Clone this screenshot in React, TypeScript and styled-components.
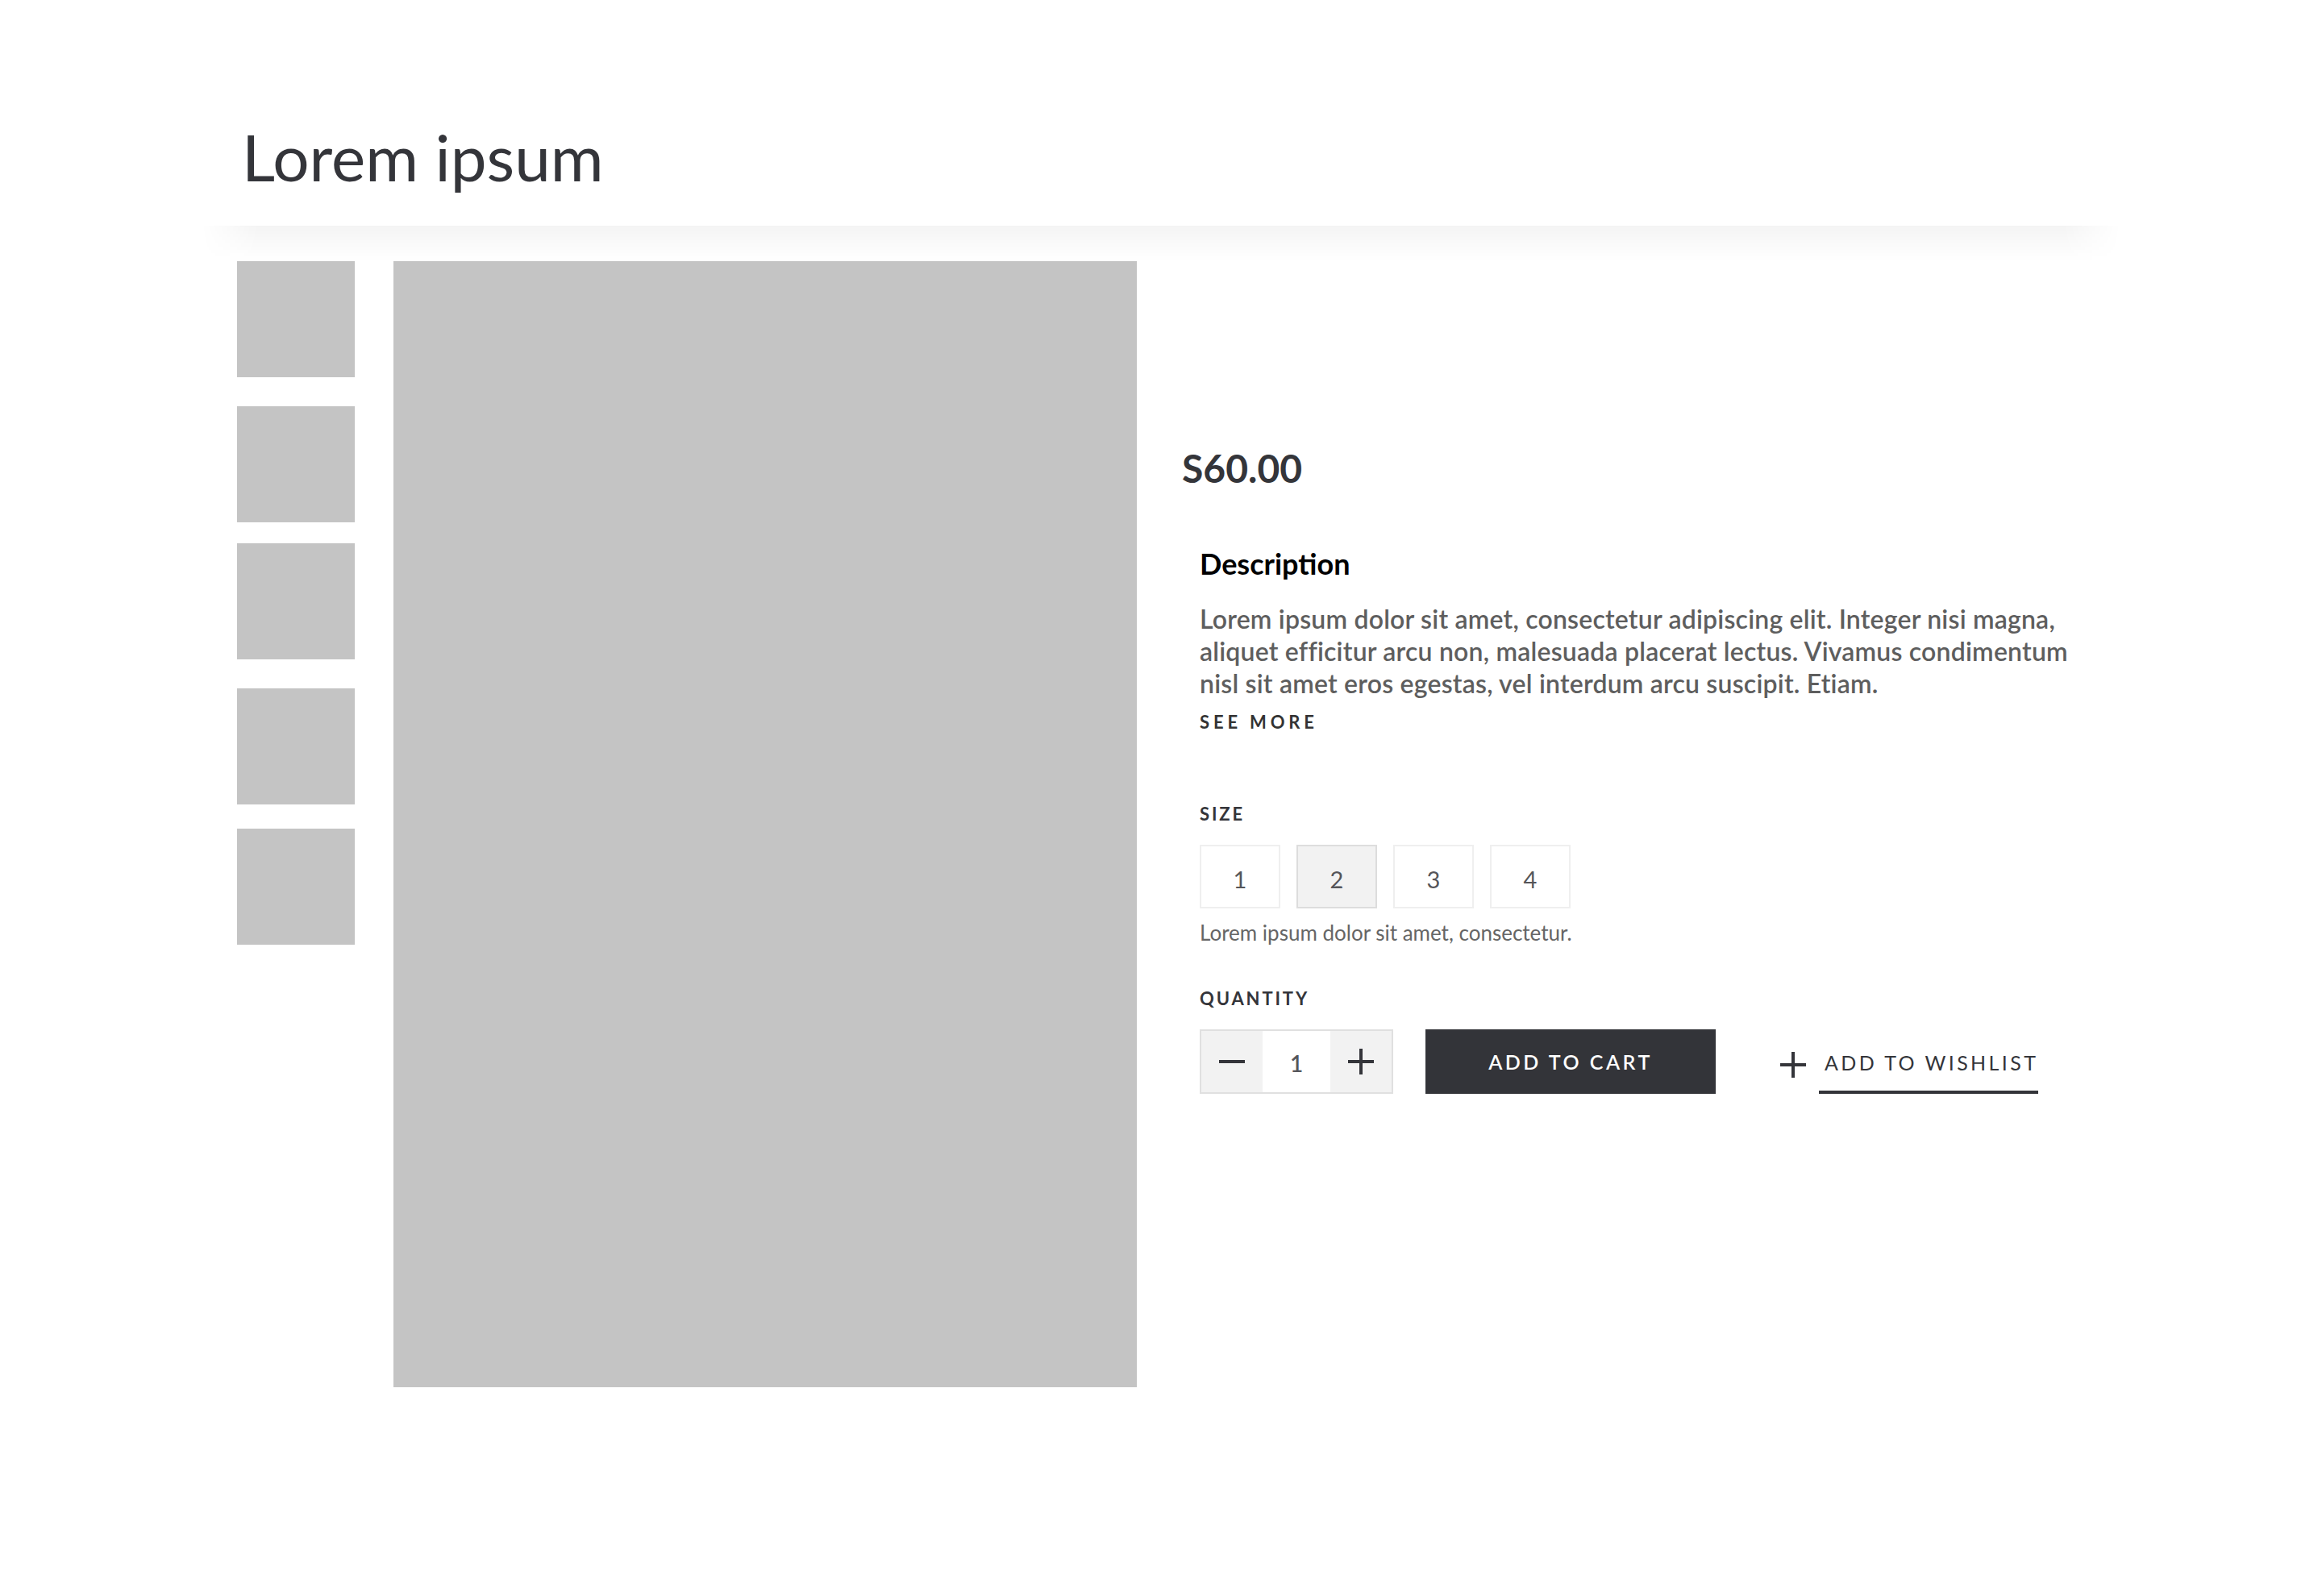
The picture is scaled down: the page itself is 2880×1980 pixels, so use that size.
import React, { FC, useState } from "react";
import styled, { createGlobalStyle } from "styled-components";

const GlobalStyle = createGlobalStyle`
  * {
    box-sizing: border-box;
  }
  body {
    margin: 0;
    background: #fff;
    font-family: Lato, "Noto Sans", sans-serif;
    color: #34353a;
  }
`;

// 顶部
const Header = styled.header`
  position: relative;
  width: 2380px;
  margin: 0 auto;
  padding: 146px 50px 38px;
  background: #fff;

  /* 底部的淡阴影 */
  &::after {
    content: "";
    position: absolute;
    left: 0;
    right: 0;
    top: 100%;
    height: 44px;
    background: linear-gradient(rgba(0, 0, 0, 0.045), rgba(0, 0, 0, 0));
    mask-image: linear-gradient(
      to right,
      transparent,
      #000 70px,
      #000 calc(100% - 70px),
      transparent
    );
    pointer-events: none;
  }
`;

const Title = styled.h1`
  margin: 0;
  font-size: 80px;
  font-weight: 400;
  line-height: 1.2;
  color: #34353a;
`;

// 主体
const Body = styled.main`
  width: 2380px;
  margin: 0 auto;
  padding: 44px 44px 0;
  display: flex;
  align-items: flex-start;
`;

const Thumbs = styled.div`
  display: flex;
  flex-direction: column;
  width: 146px;
`;

const Thumb = styled.div<{ $gap: number }>`
  width: 146px;
  height: 144px;
  margin-top: ${(p) => p.$gap}px;
  background: #c4c4c4;
`;

const Preview = styled.div`
  width: 922px;
  height: 1397px;
  margin-left: 48px;
  background: #c4c4c4;
`;

const Info = styled.section`
  display: flex;
  flex-direction: column;
  margin-left: 56px;
  padding-top: 228px;
`;

const Price = styled.div`
  font-size: 48px;
  font-weight: 700;
  line-height: 1.2;
  color: #34353a;
`;

const Details = styled.div`
  display: flex;
  flex-direction: column;
  align-items: flex-start;
  padding-left: 22px;
  margin-top: 68px;
`;

const DescTitle = styled.h2`
  margin: 0;
  font-size: 36px;
  font-weight: 700;
  line-height: 1.2;
  color: #000;
`;

const DescText = styled.p`
  margin: 27px 0 0;
  max-width: 1090px;
  font-size: 32px;
  font-weight: 600;
  line-height: 40px;
  letter-spacing: 0.2px;
  color: #5e5e5e;
`;

const SeeMore = styled.button`
  margin-top: 15px;
  padding: 0;
  border: none;
  background: none;
  font-family: inherit;
  font-size: 22px;
  font-weight: 700;
  line-height: 26px;
  letter-spacing: 0.22em;
  color: #333;
  cursor: pointer;
`;

const Label = styled.div<{ $top: number }>`
  margin-top: ${(p) => p.$top}px;
  font-size: 22px;
  font-weight: 700;
  line-height: 26px;
  letter-spacing: 0.13em;
  color: #34353a;
`;

const SizeRow = styled.div`
  display: flex;
  gap: 20px;
  margin-top: 25px;
`;

const SizeOption = styled.button<{ $selected: boolean }>`
  width: 100px;
  height: 79px;
  display: flex;
  align-items: center;
  justify-content: center;
  padding: 7px 0 0;
  border: 2px solid ${(p) => (p.$selected ? "#dddddd" : "#efefef")};
  background: ${(p) => (p.$selected ? "#f2f2f2" : "#fff")};
  font-family: inherit;
  font-size: 29px;
  font-weight: 400;
  color: #555559;
  cursor: pointer;
`;

const Hint = styled.div`
  margin-top: 15px;
  font-size: 26px;
  line-height: 31px;
  color: #666;
`;

const BuyRow = styled.div`
  display: flex;
  align-items: stretch;
  margin-top: 25px;
  height: 80px;
`;

const Stepper = styled.div`
  display: flex;
  border: 2px solid #e0e0e0;
`;

const StepButton = styled.button`
  width: 76px;
  display: flex;
  align-items: center;
  justify-content: center;
  padding: 0;
  border: none;
  background: #f2f2f2;
  color: #34353a;
  cursor: pointer;
`;

const StepValue = styled.div`
  width: 84px;
  display: flex;
  align-items: center;
  justify-content: center;
  padding-top: 4px;
  background: #fff;
  font-size: 28px;
  font-weight: 600;
  color: #55565b;
`;

const CartButton = styled.button`
  width: 360px;
  margin-left: 40px;
  border: none;
  background: #333439;
  color: #fff;
  font-family: inherit;
  font-size: 25px;
  font-weight: 600;
  letter-spacing: 0.14em;
  cursor: pointer;
`;

const Wishlist = styled.a`
  display: flex;
  align-items: stretch;
  margin-left: 80px;
  color: #34353a;
  text-decoration: none;
  cursor: pointer;
`;

const WishIcon = styled.span`
  display: flex;
  align-items: center;
  padding-top: 8px;
  margin-right: 16px;
`;

const WishText = styled.span`
  display: flex;
  align-items: center;
  padding: 6px 0 0 7px;
  border-bottom: 4px solid #333439;
  font-size: 25px;
  font-weight: 400;
  letter-spacing: 0.136em;
`;

const Minus: FC<{ size: number }> = ({ size }) => (
  <svg width={size} height={size} viewBox="0 0 32 32">
    <line x1="0" y1="16" x2="32" y2="16" stroke="currentColor" strokeWidth="4" />
  </svg>
);

const Plus: FC<{ size: number }> = ({ size }) => (
  <svg width={size} height={size} viewBox="0 0 32 32">
    <line x1="0" y1="16" x2="32" y2="16" stroke="currentColor" strokeWidth="4" />
    <line x1="16" y1="0" x2="16" y2="32" stroke="currentColor" strokeWidth="4" />
  </svg>
);

const thumbGaps = [0, 36, 26, 36, 30];
const sizes = ["1", "2", "3", "4"];

const App: FC = () => {
  const [size, setSize] = useState("2");
  const [qty, setQty] = useState(1);

  return (
    <>
      <GlobalStyle />
      <Header>
        <Title>Lorem ipsum</Title>
      </Header>
      <Body>
        <Thumbs>
          {thumbGaps.map((g, i) => (
            <Thumb key={i} $gap={g} />
          ))}
        </Thumbs>
        <Preview />
        <Info>
          <Price>S60.00</Price>
          <Details>
            <DescTitle>Description</DescTitle>
            <DescText>
              Lorem ipsum dolor sit amet, consectetur adipiscing elit. Integer nisi magna,
              aliquet efficitur arcu non, malesuada placerat lectus. Vivamus condimentum
              nisl sit amet eros egestas, vel interdum arcu suscipit. Etiam.
            </DescText>
            <SeeMore>SEE MORE</SeeMore>

            <Label $top={88}>SIZE</Label>
            <SizeRow>
              {sizes.map((s) => (
                <SizeOption key={s} $selected={s === size} onClick={() => setSize(s)}>
                  {s}
                </SizeOption>
              ))}
            </SizeRow>
            <Hint>Lorem ipsum dolor sit amet, consectetur.</Hint>

            <Label $top={53}>QUANTITY</Label>
            <BuyRow>
              <Stepper>
                <StepButton onClick={() => setQty(Math.max(1, qty - 1))}>
                  <Minus size={32} />
                </StepButton>
                <StepValue>{qty}</StepValue>
                <StepButton onClick={() => setQty(qty + 1)}>
                  <Plus size={32} />
                </StepButton>
              </Stepper>
              <CartButton>ADD TO CART</CartButton>
              <Wishlist>
                <WishIcon>
                  <Plus size={32} />
                </WishIcon>
                <WishText>ADD TO WISHLIST</WishText>
              </Wishlist>
            </BuyRow>
          </Details>
        </Info>
      </Body>
    </>
  );
};

export default App;
